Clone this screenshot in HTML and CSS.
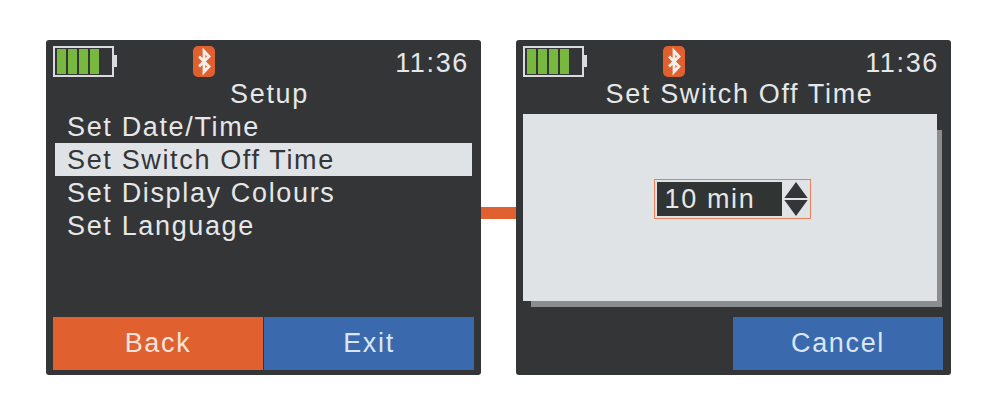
FILE: index.html
```html
<!DOCTYPE html>
<html lang="en">
<head>
    <meta charset="UTF-8">
    <meta name="viewport" content="width=device-width, initial-scale=1.0">
    <title>Setup Screens</title>
    <link rel="stylesheet" href="styles.css">
</head>
<body>
    <div class="screens">
        <section class="screen">
            <div class="status">
                <div class="battery"><i></i><i></i><i></i><i></i></div>
                <svg class="bt" viewBox="0 0 22 31">
                    <rect width="22" height="31" rx="5" fill="#e0602f"/>
                    <path d="M6 10.500 L16 20.500 L11 26 V5 L16 10.500 L6 20.500" fill="none" stroke="#f4efe9" stroke-width="2.800"/>
                </svg>
                <div class="time">11:36</div>
            </div>
            <h1 class="title">Setup</h1>
            <ul class="menu">
                <li>Set Date/Time</li>
                <li class="selected">Set Switch Off Time</li>
                <li>Set Display Colours</li>
                <li>Set Language</li>
            </ul>
            <div class="buttons">
                <div class="btn btn-orange">Back</div>
                <div class="btn btn-blue">Exit</div>
            </div>
        </section>

        <div class="connector"></div>

        <section class="screen">
            <div class="status">
                <div class="battery"><i></i><i></i><i></i><i></i></div>
                <svg class="bt" viewBox="0 0 22 31">
                    <rect width="22" height="31" rx="5" fill="#e0602f"/>
                    <path d="M6 10.500 L16 20.500 L11 26 V5 L16 10.500 L6 20.500" fill="none" stroke="#f4efe9" stroke-width="2.800"/>
                </svg>
                <div class="time">11:36</div>
            </div>
            <h1 class="title">Set Switch Off Time</h1>
            <div class="dialog">
                <div class="spinner">
                    <div class="spinner-value">10 min</div>
                    <svg class="arrows" viewBox="0 0 26 38">
                        <path d="M13 0 L26 18 H0 Z M0 20 H26 L13 38 Z" fill="#333537"/>
                    </svg>
                </div>
            </div>
            <div class="buttons buttons-right">
                <div class="btn btn-blue">Cancel</div>
            </div>
        </section>
    </div>
</body>
</html>
```

FILE: styles.css
```css
body {
    margin: 0;
    background-color: #fff;
    font-family: "Liberation Sans", Arial, sans-serif;
}
.screens {
    display: flex;
    padding: 40px 46px 38px;
}
.screen {
    position: relative;
    isolation: isolate;
    display: flex;
    flex-direction: column;
    width: 435px;
    height: 335px;
    box-sizing: border-box;
    padding: 6px 7px 5px;
    background-color: #333537;
    border-radius: 3px;
    color: #e6e7e8;
}
.connector {
    width: 35px;
    height: 12px;
    margin-top: 167px;
    background-color: #e0602f;
}
.status {
    display: flex;
    align-items: flex-start;
    height: 31px;
}
.battery {
    position: relative;
    display: flex;
    gap: 2px;
    width: 61px;
    height: 31px;
    box-sizing: border-box;
    padding: 1px 2px;
    border: 2px solid #d9dcde;
}
.battery::after {
    content: "";
    position: absolute;
    right: -5px;
    top: 7px;
    width: 3px;
    height: 12px;
    background-color: #d9dcde;
}
.battery i {
    width: 9px;
    background-color: #78b83e;
}
.bt {
    width: 22px;
    height: 31px;
    margin-left: 79px;
}
.time {
    margin-left: auto;
    margin-right: 5px;
    padding-top: 2px;
    font-size: 27px;
    line-height: 30px;
    letter-spacing: 1.65px;
}
.title {
    margin: 1px 0 0;
    height: 32px;
    padding-left: 12px;
    font-size: 27px;
    font-weight: normal;
    line-height: 32px;
    letter-spacing: 1.65px;
    text-align: center;
}
.menu {
    list-style: none;
    margin: 0;
    padding: 0 2px;
}
.menu li {
    height: 33px;
    padding-left: 12px;
    font-size: 27px;
    line-height: 34px;
    letter-spacing: 1.65px;
}
.menu .selected {
    background-color: #e0e3e6;
    color: #333537;
}
.buttons {
    display: flex;
    gap: 1px;
    margin-top: auto;
}
.buttons-right {
    justify-content: flex-end;
    padding-right: 1px;
}
.btn {
    width: 210px;
    height: 53px;
    font-size: 27px;
    line-height: 53px;
    letter-spacing: 1.65px;
    text-align: center;
}
.btn-orange {
    background-color: #e0602f;
    color: #f6e4da;
}
.btn-blue {
    background-color: #3a69ad;
    color: #d8e6f5;
}
.dialog {
    position: relative;
    display: flex;
    justify-content: center;
    align-items: center;
    width: 414px;
    height: 187px;
    margin-top: 4px;
    padding: 0 0 17px 4px;
    box-sizing: border-box;
    background-color: #e0e3e6;
}
.dialog::after {
    content: "";
    position: absolute;
    left: 8px;
    right: -5px;
    top: 16px;
    bottom: -6px;
    background-color: #8a8c8d;
    z-index: -1;
}
.spinner {
    display: flex;
    align-items: center;
    gap: 2px;
    width: 157px;
    height: 40px;
    box-sizing: border-box;
    padding: 2px;
    border: 1px solid #e8805c;
}
.spinner-value {
    width: 125px;
    height: 34px;
    padding-left: 8px;
    box-sizing: border-box;
    background-color: #303432;
    color: #e6e7e8;
    font-size: 27px;
    line-height: 34px;
    letter-spacing: 1.65px;
}
.arrows {
    width: 24px;
    height: 34px;
}
```
